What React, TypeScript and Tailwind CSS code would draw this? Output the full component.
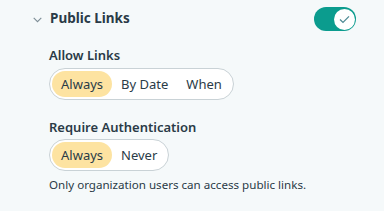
import { useState } from 'react';

function Segmented({ options, value, onChange }: { options: string[]; value: string; onChange: (v: string) => void }) {
  return (
    <div className="inline-flex items-center h-[32px] p-[2px] rounded-full border border-[#c9d2d6] bg-white">
      {options.map((o) => (
        <button
          key={o}
          onClick={() => onChange(o)}
          className={
            'h-[26px] px-[9px] rounded-full text-[13px] leading-none text-[#2a3b47] ' +
            (o === value ? 'bg-[#fde3a1]' : 'bg-transparent')
          }
        >
          {o}
        </button>
      ))}
    </div>
  );
}

export default function App() {
  const [enabled, setEnabled] = useState(true);
  const [links, setLinks] = useState('Always');
  const [auth, setAuth] = useState('Always');

  return (
    <div className="w-[384px] h-[211px] bg-[#f5f9fa] pt-[7px] pl-[33px] pr-[28px] font-['Noto_Sans',sans-serif] text-[#2a3b47]">
      <div className="flex items-center justify-between h-[24px]">
        <div className="flex items-center gap-[8px]">
          <svg width="9" height="6" viewBox="0 0 9 6" className="mt-[1px]">
            <path d="M0.7 0.9 L4.5 4.7 L8.3 0.9" fill="none" stroke="#7d8d96" strokeWidth="1.1" />
          </svg>
          <span className="text-[13.5px] font-bold leading-none">Public Links</span>
        </div>
        <button
          onClick={() => setEnabled(!enabled)}
          className={'w-[42px] h-[24px] rounded-full flex items-center px-[1.5px] ' + (enabled ? 'bg-[#0b9c8e] justify-end' : 'bg-[#b8c2c7] justify-start')}
        >
          <span className="w-[21px] h-[21px] rounded-full bg-white flex items-center justify-center">
            {enabled && (
              <svg width="11" height="9" viewBox="0 0 11 9">
                <path d="M1 4.6 L4 7.4 L10 1.4" fill="none" stroke="#4d8a94" strokeWidth="1.3" />
              </svg>
            )}
          </span>
        </button>
      </div>
      <div className="pl-[16px]">
        <div className="mt-[15px] text-[13px] font-semibold leading-[18px]">Allow Links</div>
        <div className="mt-[4px]">
          <Segmented options={['Always', 'By Date', 'When']} value={links} onChange={setLinks} />
        </div>
        <div className="mt-[18px] text-[13px] font-semibold leading-[18px]">Require Authentication</div>
        <div className="mt-[3px]">
          <Segmented options={['Always', 'Never']} value={auth} onChange={setAuth} />
        </div>
        <div className="mt-[6px] text-[11.6px] leading-[16px]">Only organization users can access public links.</div>
      </div>
    </div>
  );
}
